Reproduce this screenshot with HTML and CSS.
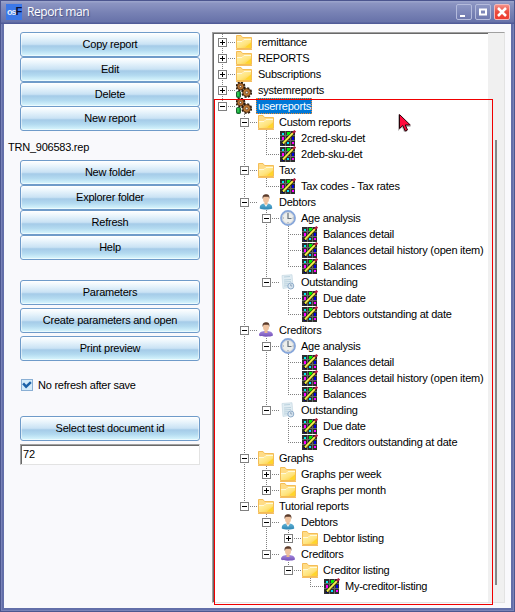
FILE: index.html
```html
<!DOCTYPE html>
<html lang="en">
<head>
<meta charset="utf-8">
<title>Report man</title>
<link rel="stylesheet" href="styles.css">
</head>
<body>
<svg class="defs" aria-hidden="true">
  <defs>
    <linearGradient id="gold" x1="0" y1="0" x2="1" y2="1"><stop offset="0" stop-color="#fff3b0"/><stop offset=".55" stop-color="#ffe47e"/><stop offset="1" stop-color="#fdc92b"/></linearGradient>
    <linearGradient id="blue" x1="0" y1="0" x2="0" y2="1"><stop offset="0" stop-color="#62b3d6"/><stop offset="1" stop-color="#2e86b4"/></linearGradient>
    <linearGradient id="violet" x1="0" y1="0" x2="0" y2="1"><stop offset="0" stop-color="#a58ade"/><stop offset="1" stop-color="#7350b8"/></linearGradient>
    <symbol id="folder" viewBox="0 0 16 16">
      <path d="M.5 14.500V1.500H5l1.500 2H15.500v11z" fill="#ffdc86" stroke="#f4bd56"/>
      <path d="M1 14V8h5l2-2h7v8z" fill="url(#gold)"/>
      <path d="M1 7.500h5l2-2h7" fill="none" stroke="#fff9d9"/>
      <path d="M9 13.500l6-5v5z" fill="#ffd52c"/>
      <path d="M0 15.500h16" stroke="#f5be62"/>
    </symbol>
    <symbol id="gears" viewBox="0 0 16 16">
      <circle cx="4.500" cy="4.500" r="4" fill="none" stroke="#241508" stroke-width="1.800" stroke-dasharray="1.900 1.240"/>
      <circle cx="4.500" cy="4.500" r="3.400" fill="#b9712f" stroke="#4b2a10" stroke-width=".9"/>
      <circle cx="4.500" cy="4.500" r="1.100" fill="#eee" stroke="#4b2a10" stroke-width=".6"/>
      <circle cx="10.700" cy="10.500" r="4.500" fill="none" stroke="#241508" stroke-width="1.800" stroke-dasharray="2.100 1.430"/>
      <circle cx="10.700" cy="10.500" r="3.900" fill="#bd7935" stroke="#4b2a10" stroke-width=".9"/>
      <circle cx="10.700" cy="10.500" r="1.300" fill="#e8e0d2" stroke="#4b2a10" stroke-width=".6"/>
      <rect x=".5" y="9.500" width="4" height="6" rx="1" fill="#0d9d35" stroke="#063f16" stroke-width=".8"/>
      <path d="M2 10v4" stroke="#58df6c"/>
    </symbol>
    <symbol id="report" viewBox="0 0 16 16">
      <path d="M0 1h15v15H0z" fill="#2e2e2e"/>
      <path d="M0 5.500h15M0 10.500h15M5.500 1v15M10.500 1v15" stroke="#666"/>
      <path d="M2 3h2v2H2z" fill="#0ee"/><path d="M7 2h3v3H7z" fill="#0e0"/>
      <path d="M2 7h2v3H2z" fill="#f0f"/><path d="M2 12h2v3H2z" fill="#00a"/>
      <path d="M12 7h2v3h-2z" fill="#00d"/><path d="M7 12h2v2H7z" fill="#0df"/><path d="M12 12h2v2h-2z" fill="#f0f"/>
      <path d="M2.500 14L13.500 2.500" stroke="#000" stroke-width="3.200"/>
      <path d="M3 13.500L13 3" stroke="#f4f04a" stroke-width="2.200"/>
      <path d="M4 13L13.500 3.500" stroke="#a79a17" stroke-width=".4"/>
      <path d="M12.800 3.200l2.400-2.400" stroke="#b01c3c" stroke-width="2.400"/>
    </symbol>
    <symbol id="head" viewBox="0 0 16 16">
      <ellipse cx="8" cy="5" rx="3" ry="4" fill="#efc3a0"/>
      <path d="M4.700 5C4 1 6 .2 8.200.2S12 1.500 11.300 5l-.8-2.200H5.700z" fill="#5b3b2a"/>
      <path d="M6.500 8.500h3v2.500h-3z" fill="#e9b891"/>
    </symbol>
    <symbol id="debtor" viewBox="0 0 16 16">
      <path d="M1.800 14.500c0-3.500 1.200-4.500 4.500-5l1.700 1.500 1.700-1.500c3.300.5 4.500 1.500 4.500 5-2.500 1.300-9.900 1.300-12.400 0z" fill="url(#blue)"/>
      <use href="#head"/>
      <path d="M6.200 9.500L8 13l1.800-3.500L8 11z" fill="#fff"/>
    </symbol>
    <symbol id="creditor" viewBox="0 0 16 16">
      <path d="M1 13.500c0-3 2-4 5.300-4.500h3.400c3.300.5 5.300 1.500 5.300 4.500-2 1.600-12 1.600-14 0z" fill="url(#violet)"/>
      <use href="#head"/>
    </symbol>
    <symbol id="clock" viewBox="0 0 16 16">
      <circle cx="8" cy="8" r="7" fill="#e9edf0" stroke="#86a6da" stroke-width="1.800"/>
      <circle cx="8" cy="8" r="5.700" fill="#eeefec" stroke="#bfc7d2" stroke-width=".8"/>
      <path d="M8 3v5.500h3.500" fill="none" stroke="#65707c" stroke-width="1.200"/>
      <path d="M8 12v1M3 8h1M12.500 8h1" stroke="#929aa3"/>
    </symbol>
    <symbol id="sheet" viewBox="0 0 16 16">
      <path d="M2 1.500L12 .7l1 12L3 14.500z" fill="#e1edf3" stroke="#c5d8e2" stroke-width=".7"/>
      <path d="M4 3l6-.5M4 6l7-.5M4 8l7-.5M4 10l4-.3M4 12l4-.3" stroke="#b0c9d7" stroke-width=".8"/>
      <circle cx="10.800" cy="12" r="3" fill="#dbe7f1" stroke="#8facc9"/>
      <path d="M10.800 10v2h1.500" fill="none" stroke="#6f8ba8" stroke-width=".7"/>
    </symbol>
  </defs>
</svg>

<div class="window">
  <header class="titlebar">
    <span class="logo">os<b>F</b></span>
    <span class="title">Report man</span>
    <span class="control"><svg viewBox="0 0 14 14"><path d="M3 11h5" stroke="#fff" stroke-width="2"/></svg></span>
    <span class="control"><svg viewBox="0 0 14 14"><path d="M4 4.500h6v5H4z" fill="none" stroke="#fff" stroke-width="2"/></svg></span>
    <span class="control close"><svg viewBox="0 0 14 14"><path d="M3 3l8 8M11 3l-8 8" stroke="#fff" stroke-width="2.500"/></svg></span>
  </header>
  <main class="content">
    <section class="actions">
      <div class="group"><button>Copy report</button><button>Edit</button><button>Delete</button><button class="snug">New report</button></div>
      <div class="filename">TRN_906583.rep</div>
      <div class="group"><button>New folder</button><button>Explorer folder</button><button>Refresh</button><button>Help</button></div>
      <div class="group spaced"><button>Parameters</button><button>Create parameters and open</button><button>Print preview</button></div>
      <label class="option"><span class="checkbox"><svg viewBox="0 0 9 9"><path d="M1 3l2.700 3L8 2" fill="none" stroke="#1d62a8" stroke-width="2.200"/></svg></span>No refresh after save</label>
      <div class="group"><button>Select test document id</button></div>
      <input class="docid" type="text" value="72">
    </section>
    <section class="panel">
      <ul class="tree">
        <li><div class="row"><i class="box plus"></i><svg class="icon"><use href="#folder"/></svg><span>remittance</span></div></li>
        <li><div class="row"><i class="box plus"></i><svg class="icon"><use href="#folder"/></svg><span>REPORTS</span></div></li>
        <li><div class="row"><i class="box plus"></i><svg class="icon"><use href="#folder"/></svg><span>Subscriptions</span></div></li>
        <li><div class="row"><i class="box plus"></i><svg class="icon"><use href="#gears"/></svg><span>systemreports</span></div></li>
        <li><div class="row"><i class="box"></i><svg class="icon"><use href="#gears"/></svg><span class="selected">userreports</span></div>
          <ul>
            <li><div class="row"><i class="box"></i><svg class="icon"><use href="#folder"/></svg><span>Custom reports</span></div>
              <ul>
                <li><div class="row"><svg class="icon"><use href="#report"/></svg><span>2cred-sku-det</span></div></li>
                <li><div class="row"><svg class="icon"><use href="#report"/></svg><span>2deb-sku-det</span></div></li>
              </ul></li>
            <li><div class="row"><i class="box"></i><svg class="icon"><use href="#folder"/></svg><span>Tax</span></div>
              <ul>
                <li><div class="row"><svg class="icon"><use href="#report"/></svg><span>Tax codes - Tax rates</span></div></li>
              </ul></li>
            <li><div class="row"><i class="box"></i><svg class="icon"><use href="#debtor"/></svg><span>Debtors</span></div>
              <ul>
                <li><div class="row"><i class="box"></i><svg class="icon"><use href="#clock"/></svg><span>Age analysis</span></div>
                  <ul>
                    <li><div class="row"><svg class="icon"><use href="#report"/></svg><span>Balances detail</span></div></li>
                    <li><div class="row"><svg class="icon"><use href="#report"/></svg><span>Balances detail history (open item)</span></div></li>
                    <li><div class="row"><svg class="icon"><use href="#report"/></svg><span>Balances</span></div></li>
                  </ul></li>
                <li><div class="row"><i class="box"></i><svg class="icon"><use href="#sheet"/></svg><span>Outstanding</span></div>
                  <ul>
                    <li><div class="row"><svg class="icon"><use href="#report"/></svg><span>Due date</span></div></li>
                    <li><div class="row"><svg class="icon"><use href="#report"/></svg><span>Debtors outstanding at date</span></div></li>
                  </ul></li>
              </ul></li>
            <li><div class="row"><i class="box"></i><svg class="icon"><use href="#creditor"/></svg><span>Creditors</span></div>
              <ul>
                <li><div class="row"><i class="box"></i><svg class="icon"><use href="#clock"/></svg><span>Age analysis</span></div>
                  <ul>
                    <li><div class="row"><svg class="icon"><use href="#report"/></svg><span>Balances detail</span></div></li>
                    <li><div class="row"><svg class="icon"><use href="#report"/></svg><span>Balances detail history (open item)</span></div></li>
                    <li><div class="row"><svg class="icon"><use href="#report"/></svg><span>Balances</span></div></li>
                  </ul></li>
                <li><div class="row"><i class="box"></i><svg class="icon"><use href="#sheet"/></svg><span>Outstanding</span></div>
                  <ul>
                    <li><div class="row"><svg class="icon"><use href="#report"/></svg><span>Due date</span></div></li>
                    <li><div class="row"><svg class="icon"><use href="#report"/></svg><span>Creditors outstanding at date</span></div></li>
                  </ul></li>
              </ul></li>
            <li><div class="row"><i class="box"></i><svg class="icon"><use href="#folder"/></svg><span>Graphs</span></div>
              <ul>
                <li><div class="row"><i class="box plus"></i><svg class="icon"><use href="#folder"/></svg><span>Graphs per week</span></div></li>
                <li><div class="row"><i class="box plus"></i><svg class="icon"><use href="#folder"/></svg><span>Graphs per month</span></div></li>
              </ul></li>
            <li><div class="row"><i class="box"></i><svg class="icon"><use href="#folder"/></svg><span>Tutorial reports</span></div>
              <ul>
                <li><div class="row"><i class="box"></i><svg class="icon"><use href="#debtor"/></svg><span>Debtors</span></div>
                  <ul>
                    <li><div class="row"><i class="box plus"></i><svg class="icon"><use href="#folder"/></svg><span>Debtor listing</span></div></li>
                  </ul></li>
                <li><div class="row"><i class="box"></i><svg class="icon"><use href="#creditor"/></svg><span>Creditors</span></div>
                  <ul>
                    <li><div class="row"><i class="box"></i><svg class="icon"><use href="#folder"/></svg><span>Creditor listing</span></div>
                      <ul>
                        <li><div class="row"><svg class="icon"><use href="#report"/></svg><span>My-creditor-listing</span></div></li>
                      </ul></li>
                  </ul></li>
              </ul></li>
          </ul></li>
      </ul>
      <div class="scrollbar"><div class="thumb"></div></div>
    </section>
  </main>
  <div class="outline"></div>
  <svg class="pointer" viewBox="0 0 14 20"><path d="M0 1v17l4-3.500 2 4.500h3l-1.500-5H13z" fill="#bbb"/><path d="M1.500 1.500v14l3.300-3 2.400 5.500 2.300-1-2.200-5h5z" fill="#ff0a3c" stroke="#2a0008"/></svg>
</div>
</body>
</html>
```

FILE: styles.css
```css
* { box-sizing: border-box; }
body { margin: 0; font: 11px/16px "Liberation Sans", Arial, sans-serif; letter-spacing: -.24px; color: #000; }
.defs { position: absolute; width: 0; height: 0; }
.window {
  position: relative; width: 515px; height: 612px; padding: 0 4px 4px;
  display: flex; flex-direction: column; background: #636fa9;
  box-shadow: inset 0 0 0 1px #4c568f, inset 0 0 0 2px #7983b8;
}
.titlebar {
  height: 24px; margin: 0 -3px; padding: 4px 4px 0 5px; display: flex; flex: none;
  background: linear-gradient(#4c568f 0 1px, #9aa3cb 1px 2px, #8c95c2 3px, #7781b4 13px, #6772a9 22px, #505b98 23px);
}
.logo {
  width: 16px; height: 16px; background: #3c78e8; color: #e2ebfc; overflow: hidden;
  font: bold 9px/15px "Liberation Sans", sans-serif; letter-spacing: -1px; white-space: nowrap; padding-left: 1px;
}
.logo b { color: #0a1238; font-size: 11px; }
.title {
  flex: 1; margin-left: 5px; color: #fff; font: 12px/16px "Open Sans", "Noto Sans", sans-serif; letter-spacing: -.4px;
  text-shadow: 1px 1px 1px #4a5488;
}
.control {
  width: 16px; height: 16px; margin-left: 3px; border: 1px solid #b4bbdc; border-radius: 2px;
  background: linear-gradient(#8c96c3, #6f79af); flex: none;
}
.control svg { display: block; width: 14px; height: 14px; }
.close { border-color: #f3b9b9; background: linear-gradient(#f49088, #ea4a3c 50%, #f03c30); }
.content { flex: 1; display: flex; background: #f9f9fc; min-height: 0; }
.actions { width: 208px; flex: none; padding: 8px 12px 0 16px; }
.group { display: flex; flex-direction: column; }
.group button {
  height: 25px; padding: 0 0 1px; border: 1px solid #6f9bc9; border-radius: 3px; color: #000; font: inherit; letter-spacing: inherit;
  background: linear-gradient(#fff, #eaf5fc 20%, #c9e2f4 49%, #a5cbe8 56%, #b3daf0 75%, #dbf8fe);
  box-shadow: inset 0 0 0 1px rgba(255,255,255,.5);
}
.group .snug { margin-top: -1px; }
.filename { height: 29px; margin-left: -12px; padding-top: 8px; }
.spaced { margin-top: 20px; gap: 3px; }
.option { display: flex; align-items: center; height: 16px; margin: 16px 0 23px 1px; }
.checkbox { width: 12px; height: 12px; margin-right: 5px; border: 1px solid #8aafd4; background: #d5ecfa; display: flex; }
.checkbox svg { width: 10px; height: 10px; }
.docid {
  display: block; width: 180px; height: 21px; margin-top: 3px; padding: 0 2px 2px; font: inherit; letter-spacing: 0; background: #fff;
  border: 1px solid; border-color: #a0a0a0 #e3e3e3 #e3e3e3 #a0a0a0; box-shadow: inset 1px 1px #696969;
}
.panel {
  width: 293px; height: 571px; margin-top: 8px; display: flex; flex: none; overflow: hidden; background: #fff;
  border: 1px solid; border-color: #a0a0a0 #e3e3e3 #e3e3e3 #a0a0a0; box-shadow: inset 1px 1px #696969;
}
.tree, .tree ul { margin: 0; padding: 0; list-style: none; }
.tree { flex: 1; min-width: 0; padding: 1px 0 0 5px; }
.tree ul { padding-left: 22px; }
.tree li { position: relative; }
.tree li::before {
  content: ""; position: absolute; left: 4px; top: 0; bottom: 0; width: 1px;
  background: repeating-linear-gradient(#808080 0 1px, transparent 1px 2px);
}
.tree li:last-child::before { bottom: auto; height: 8px; }
.row {
  position: relative; display: flex; align-items: center; height: 16px; padding-left: 18px; white-space: nowrap;
}
.row::before {
  content: ""; position: absolute; left: 4px; top: 8px; width: 13px; height: 1px;
  background: repeating-linear-gradient(90deg, #808080 0 1px, transparent 1px 2px);
}
.box { position: relative; width: 9px; height: 9px; flex: none; margin: 1px 9px 0 -18px; border: 1px solid #808080; background: #fff; }
.box::before, .box.plus::after { content: ""; position: absolute; left: 1px; top: 3px; width: 5px; height: 1px; background: #000; }
.box.plus::after { left: 3px; top: 1px; width: 1px; height: 5px; }
.icon { width: 16px; height: 16px; flex: none; margin-right: 4px; }
.row span { padding: 0 1px 0 2px; line-height: 16px; }
.tree ul .row span { padding-left: 1px; }
.row .selected { background: #0078d7; color: #fff; outline: 1px dotted #e88a30; outline-offset: -1px; }
.scrollbar { width: 16px; flex: none; background: #f0f0f0; padding: 107px 0 0 7px; }
.thumb { width: 2px; height: 445px; background: #858585; }
.outline { position: absolute; left: 214px; top: 99px; width: 279px; height: 506px; border: 1px solid #f00000; }
.pointer { position: absolute; left: 398px; top: 113px; width: 14px; height: 20px; }
```
